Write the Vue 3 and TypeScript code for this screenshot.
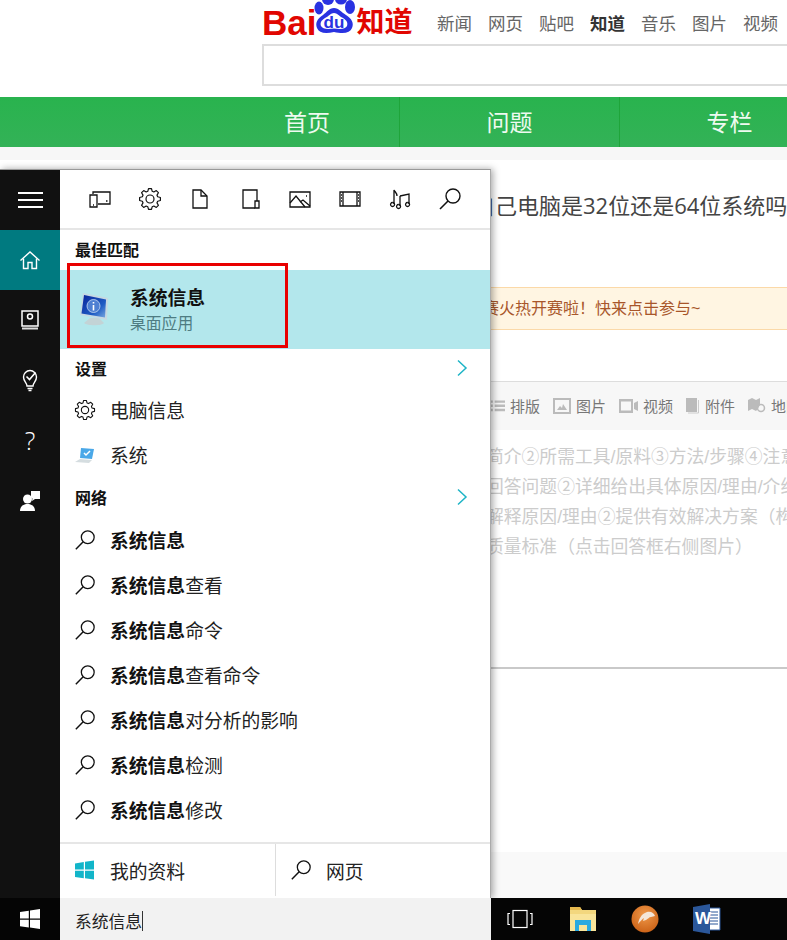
<template>
  <div class="screen">
    <svg class="defs" width="0" height="0" aria-hidden="true">
      <symbol id="magnifier" viewBox="0 0 24 24">
        <circle cx="15" cy="9" r="7" fill="none" stroke="currentColor" stroke-width="1.4" />
        <path d="M10 14 2 22" fill="none" stroke="currentColor" stroke-width="1.6" />
      </symbol>
      <symbol id="gear" viewBox="0 0 24 24">
        <path :d="gearPath" fill="none" stroke="currentColor" stroke-width="1.2" stroke-linejoin="round" />
        <circle cx="12" cy="12" r="4" fill="none" stroke="currentColor" stroke-width="1.2" />
      </symbol>
      <symbol id="chevron" viewBox="0 0 12 18">
        <path d="M2 1.5 10 9l-8 7.5" fill="none" stroke="currentColor" stroke-width="1.5" />
      </symbol>
    </svg>

    <!-- page behind the start menu -->
    <div class="page">
      <header class="top">
        <div class="top-row">
          <div class="logo">
            <span class="logo-bai">Bai</span>
            <svg class="paw" width="42" height="44" viewBox="0 0 42 44">
              <ellipse cx="5" cy="10" rx="4.5" ry="6.5" fill="#2932e1" />
              <ellipse cx="14" cy="1" rx="6" ry="6" fill="#2932e1" />
              <ellipse cx="27" cy="1" rx="6" ry="5.5" fill="#2932e1" />
              <ellipse cx="36" cy="9" rx="5" ry="7" fill="#2932e1" />
              <path d="M20 10c5 0 7 4 12 7 6 4 8 8 6 13-2 5-8 6-18 4-9 2-15 1-17-4-2-5 0-9 6-13 4-3 6-7 11-7z" fill="#2932e1" />
              <path d="M20 15c3 0 5 3 9 5 4 2.500 5 5 4 8-1.500 3-6 3.500-13 2.500-7 1-11.500.5-13-2.500-1-3 0-5.500 4-8 4-2 6-5 9-5z" fill="#fff" />
              <text x="20" y="30" text-anchor="middle" class="paw-text">du</text>
            </svg>
            <span class="logo-zhidao">知道</span>
          </div>
          <nav class="channels">
            <span v-for="c in channels" :key="c" class="channel" :class="{ current: c === '知道' }">{{ c }}</span>
          </nav>
        </div>
        <div class="search-box"></div>
      </header>

      <div class="green-nav">
        <div class="green-cell first">首页</div>
        <div class="green-cell">问题</div>
        <div class="green-cell">专栏</div>
      </div>
      <div class="strip"></div>

      <main class="content">
        <h1 class="title">自己电脑是32位还是64位系统吗</h1>
        <div class="banner">赛火热开赛啦！快来点击参与~</div>
        <div class="toolbar">
          <span class="tool">
            <svg width="15" height="14" viewBox="0 0 16 14"><path d="M0 1h3v2.500H0zM5 1h11v2.500H5zM0 5.500h3V8H0zM5 5.500h11V8H5zM0 10h3v2.500H0zM5 10h11v2.500H5z" fill="#bbb" /></svg>
            排版
          </span>
          <span class="tool">
            <svg width="18" height="16" viewBox="0 0 18 16"><path fill-rule="evenodd" d="M0 0h18v16H0zM2 2v12h14V2z" fill="#bbb" /><path d="M4 12l3-4 2 2 1-4 4 6z" fill="#bbb" /></svg>
            图片
          </span>
          <span class="tool">
            <svg width="19" height="14" viewBox="0 0 19 14"><path fill-rule="evenodd" d="M0 0h14v14H0zM2 2.500v9h10v-9z" fill="#bbb" /><path d="M15 4l4-2v10l-4-2z" fill="#bbb" /></svg>
            视频
          </span>
          <span class="tool">
            <svg width="14" height="16" viewBox="0 0 14 16"><path d="M0 0h11v14H0z" fill="#bbb" /><path d="M12.500 2v13H2" fill="none" stroke="#ccc" /></svg>
            附件
          </span>
          <span class="tool">
            <svg width="18" height="16" viewBox="0 0 18 16"><path d="M0 2l4-2 4 2 4-2v7l-3 5-1 1-4-2-4 2z" fill="#bbb" /><circle cx="13" cy="10" r="3.500" fill="none" stroke="#bbb" stroke-width="1.500" /></svg>
            地图
          </span>
        </div>
        <div class="editor">
          <p v-for="line in hints" :key="line">{{ line }}</p>
        </div>
      </main>
      <div class="page-rest"></div>
    </div>

    <!-- start menu -->
    <aside class="menu">
      <div class="rail">
        <div class="burger"><i></i><i></i><i></i></div>
        <div class="rail-item active">
          <svg width="24" height="24" viewBox="0 0 24 24" fill="none" stroke="#fff" stroke-width="1.400">
            <path d="M2.500 12.500 12 4l9.500 8.500" />
            <path d="M5.500 10.500V20.500h4.500v-6h4v6h4.500V10.500" />
          </svg>
        </div>
        <div class="rail-item">
          <svg width="24" height="24" viewBox="0 0 24 24">
            <path d="M4 3h16v15H4z" fill="none" stroke="#fff" stroke-width="1.500" />
            <circle cx="12" cy="8.500" r="2.500" fill="none" stroke="#fff" stroke-width="1.500" />
            <path d="M4 19.500h16v2H4z" fill="#ddd" />
          </svg>
        </div>
        <div class="rail-item">
          <svg width="24" height="24" viewBox="0 0 24 24" fill="none" stroke="#fff" stroke-width="1.400">
            <path d="M9 18c0-3-3.500-4.500-3.500-9a6.500 6.500 0 0 1 13 0c0 4.500-3.500 6-3.500 9z" />
            <path d="M9.500 20.500h5M10.500 22.500h3" />
            <path d="M8.500 8.500l3 3 6-7" stroke-width="1.600" />
          </svg>
        </div>
        <div class="rail-item question">?</div>
        <div class="rail-item">
          <svg width="24" height="24" viewBox="0 0 24 24" fill="#fff">
            <circle cx="9.500" cy="11" r="4.500" />
            <path d="M2 23c0-4.500 3-7 7.500-7s7.500 2.500 7.500 7z" />
            <path d="M13 3h9v8h-5l-3 2 .5-2.500-1.500-1z" />
          </svg>
        </div>
      </div>

      <div class="panel">
        <div class="filters">
          <span v-for="f in filterIcons" :key="f.name" class="filter">
            <svg width="24" height="24" viewBox="0 0 24 24" fill="none" stroke="currentColor" stroke-width="1.300">
              <path v-for="d in f.paths" :key="d" :d="d" />
            </svg>
          </span>
          <span class="filter">
            <svg width="24" height="24"><use href="#gear" /></svg>
          </span>
          <span class="filter search-filter">
            <svg width="24" height="24"><use href="#magnifier" /></svg>
          </span>
        </div>

        <div class="label first-label">最佳匹配</div>
        <div class="best">
          <svg class="monitor" width="32" height="36" viewBox="0 0 32 36">
            <defs>
              <linearGradient id="screenBlue" x1="0" y1="0" x2="1" y2="1">
                <stop offset="0" stop-color="#08249a" />
                <stop offset="0.65" stop-color="#1f5cc4" />
                <stop offset="1" stop-color="#7aa8e0" />
              </linearGradient>
            </defs>
            <path d="M11 26h9l5 5c-2 3-17 3-20 0z" fill="#c3d3d6" />
            <path d="M4 1l25 5-1 22-27-5z" fill="#c6d8e2" />
            <path d="M5 3l22 4.500-1 18-23.500-4z" fill="url(#screenBlue)" />
            <circle cx="14.500" cy="14" r="6.500" fill="#4f80d2" stroke="#c9dcf2" stroke-width="0.800" />
            <path d="M14.500 10v1.500M14.500 13v5.500" stroke="#fff" stroke-width="1.600" />
          </svg>
          <div class="best-text">
            <div class="best-name">系统信息</div>
            <div class="best-sub">桌面应用</div>
          </div>
        </div>
        <div class="red-box"></div>

        <div class="label with-arrow settings-label">
          设置
          <svg class="chevron" width="12" height="18"><use href="#chevron" /></svg>
        </div>
        <div class="row">
          <svg class="row-icon gear-icon" width="22" height="22"><use href="#gear" /></svg>
          <span>电脑信息</span>
        </div>
        <div class="row">
          <svg class="row-icon" width="22" height="22" viewBox="0 0 22 22">
            <path d="M7 4l13 1-2 10-12-1z" fill="#4aa8e8" />
            <path d="M10 9l2 2 4-4" fill="none" stroke="#fff" stroke-width="1.500" />
            <path d="M6 15l12 1-3 3-14-1z" fill="#d5dde0" />
          </svg>
          <span>系统</span>
        </div>
        <div class="label with-arrow">
          网络
          <svg class="chevron" width="12" height="18"><use href="#chevron" /></svg>
        </div>
        <div v-for="s in suggestions" :key="s" class="row">
          <svg class="row-icon" width="22" height="22"><use href="#magnifier" /></svg>
          <span><b>系统信息</b>{{ s }}</span>
        </div>

        <div class="footer">
          <div class="foot-left">
            <svg class="row-icon" width="20" height="20" viewBox="0 0 20 20">
              <path d="M0 3.500 8.800 2v7.500H0zM10 1.800 19 .5v9h-9zM0 10.800h8.800v7.500L0 17zM10 10.800h9v8.700l-9-1.300z" fill="#12b5c9" />
            </svg>
            <span>我的资料</span>
          </div>
          <div class="foot-right">
            <svg class="row-icon" width="22" height="22"><use href="#magnifier" /></svg>
            <span>网页</span>
          </div>
        </div>
      </div>
    </aside>

    <!-- taskbar -->
    <footer class="taskbar">
      <div class="start">
        <svg width="20" height="20" viewBox="0 0 20 20">
          <path d="M0 3 8.800 1.800v7.700H0zM10 1.600 20 0v9.500H10zM0 10.700h8.800v7.700L0 17.200zM10 10.700h10V20l-10-1.500z" fill="#fff" />
        </svg>
      </div>
      <div class="search-input">系统信息<i class="caret"></i></div>
      <div class="tray">
        <svg class="task-view" width="26" height="20" viewBox="0 0 26 20" fill="none" stroke="#fff" stroke-width="1.200">
          <rect x="6" y="1.500" width="14" height="17" />
          <path d="M3 4.500H1v11h2M23 4.500h2v11h-2" />
        </svg>
        <svg class="explorer" width="28" height="28" viewBox="0 0 28 28">
          <path d="M1 2h10l2 3h14v21H1z" fill="#f3d77e" />
          <path d="M1 2h10l2 3H1z" fill="#e6b94f" />
          <path d="M1 9h26v17H1z" fill="#f9e49a" />
          <path d="M6 15h16v11h-4v-6h-8v6H6z" fill="#2aa9e0" />
        </svg>
        <svg class="browser" width="28" height="28" viewBox="0 0 28 28">
          <defs>
            <radialGradient id="foxOrange" cx="0.5" cy="0.35" r="0.7">
              <stop offset="0" stop-color="#f0994a" />
              <stop offset="1" stop-color="#c95f14" />
            </radialGradient>
          </defs>
          <circle cx="14" cy="14" r="13.500" fill="url(#foxOrange)" />
          <path d="M7 19c1-5 3-10 9-12 4-1 7 1 8 4l-4 1c-2 0-3 2-5 3l-3 1 1-3c-2 1-4 4-6 6z" fill="#f4e6d8" />
        </svg>
        <div class="word">
          <svg width="28" height="30" viewBox="0 0 28 30">
            <path d="M15 4h12v22H15z" fill="#fff" stroke="#2b579a" />
            <path d="M17 8h8M17 11h8M17 14h8M17 17h8M17 20h8" stroke="#2b579a" stroke-width="1.200" />
            <path d="M0 3l17-3v30L0 27z" fill="#2b579a" />
          </svg>
          <span class="word-w">W</span>
        </div>
      </div>
    </footer>
  </div>
</template>

<script setup lang="ts">
const channels: string[] = ['新闻', '网页', '贴吧', '知道', '音乐', '图片', '视频']

const hints: string[] = [
  '简介②所需工具/原料③方法/步骤④注意',
  '回答问题②详细给出具体原因/理由/介绍',
  '解释原因/理由②提供有效解决方案（构',
  '质量标准（点击回答框右侧图片）'
]

const suggestions: string[] = ['', '查看', '命令', '查看命令', '对分析的影响', '检测', '修改']

const filterIcons = [
  { name: 'device', paths: ['M5 7V5h17v12H10', 'M2 8h7v12H2z', 'M18 14h1.500', 'M5 18h1'] },
  { name: 'doc', paths: ['M5 3h8l6 6v12H5z', 'M13 3v6h6'] },
  { name: 'tablet', paths: ['M19 14V3H5v18h12', 'M17 14h4v7h-4z'] },
  { name: 'image', paths: ['M2 5h20v15H2z', 'M2 16l6-7 9 11', 'M12 15l3-2 7 6', 'M18 9h1'] },
  { name: 'film', paths: ['M2 5h20v14H2z', 'M5 5v14M19 5v14', 'M3 8h1M3 11h1M3 14h1M20 8h1M20 11h1M20 14h1'] },
  { name: 'music', paths: ['M6 17V3c1 2 3 3 3 6', 'M12 9l9-2v10', 'M12 9v10', 'M4.500 15.500a2 2 0 1 0 .1 0', 'M10.500 17.500a2 2 0 1 0 .1 0', 'M19.500 15.500a2 2 0 1 0 .1 0'] }
]

// eight-tooth cog outline
const buildGear = (teeth: number, outer: number, inner: number): string => {
  const pts: string[] = []
  const step = (Math.PI * 2) / teeth
  for (let i = 0; i < teeth; i++) {
    const a = i * step
    const spots: [number, number][] = [
      [a - step * 0.36, inner],
      [a - step * 0.18, outer],
      [a + step * 0.18, outer],
      [a + step * 0.36, inner]
    ]
    for (const [ang, r] of spots) {
      pts.push(`${(12 + r * Math.cos(ang)).toFixed(2)} ${(12 + r * Math.sin(ang)).toFixed(2)}`)
    }
  }
  return 'M' + pts.join('L') + 'Z'
}

const gearPath = buildGear(8, 10.5, 8)
</script>

<style scoped>
.screen {
  position: relative;
  width: 787px;
  height: 940px;
  overflow: hidden;
  background: #fff;
  font-family: "Liberation Sans", "Noto Sans CJK SC", sans-serif;
  color: #222;
}

.defs {
  position: absolute;
}

.page {
  display: flex;
  flex-direction: column;
  height: 940px;
}

.top {
  height: 97px;
  flex: none;
  padding-left: 262px;
  box-sizing: border-box;
}

.top-row {
  height: 44px;
  display: flex;
  align-items: flex-start;
}

.logo {
  display: flex;
  width: 175px;
  height: 44px;
  flex: none;
}

.logo-bai {
  font-size: 35px;
  font-weight: 700;
  color: #e10601;
  line-height: 34px;
  margin-top: 6px;
}

.paw {
  margin: -2px 0 0 -2px;
  flex: none;
}

.paw-text {
  font-family: "Liberation Sans", sans-serif;
  font-size: 17px;
  font-weight: 700;
  fill: #2932e1;
}

.logo-zhidao {
  font-size: 28px;
  font-weight: 700;
  color: #e10601;
  line-height: 36px;
  margin-top: 5px;
  white-space: nowrap;
}

.channels {
  display: flex;
  gap: 16px;
  white-space: nowrap;
  font-size: 17.500px;
  line-height: 48px;
  color: #666;
}

.channel.current {
  color: #333;
  font-weight: 700;
}

.search-box {
  height: 42px;
  width: 600px;
  border: 2px solid #ddd;
  box-sizing: border-box;
}

.green-nav {
  height: 50px;
  flex: none;
  display: flex;
  background: linear-gradient(#29b34e, #33b257);
}

.green-cell {
  width: 220px;
  flex: none;
  text-align: center;
  color: #eefaf0;
  font-size: 23px;
  line-height: 52px;
  border-right: 1px solid #1fa53a;
  box-sizing: border-box;
}

.green-cell.first {
  width: 400px;
  padding-left: 215px;
}

.strip {
  height: 13px;
  flex: none;
  background: #f7f7f7;
}

.content {
  height: 692px;
  flex: none;
  background: #fff;
}

.title {
  margin: 0;
  height: 127px;
  box-sizing: border-box;
  padding: 30px 0 0 473px;
  font-family: "Open Sans", "Noto Sans CJK SC", sans-serif;
  font-size: 22px;
  font-weight: 400;
  line-height: 30px;
  color: #444;
  white-space: nowrap;
}

.banner {
  height: 43px;
  box-sizing: border-box;
  padding-left: 483px;
  background: #fff5e2;
  border-top: 1px solid #fbd9a8;
  border-bottom: 1px solid #fbd9a8;
  font-size: 16px;
  line-height: 41px;
  color: #a8562a;
  white-space: nowrap;
}

.toolbar {
  margin-top: 51px;
  height: 49px;
  box-sizing: border-box;
  padding: 0 0 1px 490px;
  background: #f7f7f7;
  border-top: 1px solid #ddd;
  display: flex;
  align-items: center;
  gap: 13px;
  white-space: nowrap;
  font-size: 15px;
  color: #777;
}

.tool {
  display: flex;
  align-items: center;
  gap: 5px;
}

.editor {
  height: 239px;
  box-sizing: border-box;
  padding: 12px 0 0 486px;
  border-bottom: 2px solid #c9c9c9;
}

.editor p {
  margin: 0;
  font-size: 17.800px;
  line-height: 30px;
  color: #ccc;
  white-space: nowrap;
}

.page-rest {
  flex: 1;
  background: #f9f9f9;
}

.menu {
  position: absolute;
  top: 169px;
  left: 0;
  width: 491px;
  height: 729px;
  display: flex;
  background: #fff;
  border-top: 1px solid #999;
  border-right: 1px solid #aaa;
  box-sizing: border-box;
  box-shadow: 2px 0 7px rgba(0, 0, 0, 0.35);
}

.rail {
  width: 60px;
  flex: none;
  background: #111;
  display: flex;
  flex-direction: column;
}

.burger {
  height: 60px;
  display: flex;
  flex-direction: column;
  align-items: center;
  justify-content: center;
  gap: 5px;
}

.burger i {
  display: block;
  width: 25px;
  height: 2px;
  background: #fff;
}

.rail-item {
  height: 60px;
  display: flex;
  align-items: center;
  justify-content: center;
}

.rail-item.active {
  background: #007a80;
}

.question {
  color: #fff;
  font-family: "Open Sans", sans-serif;
  font-weight: 300;
  font-size: 25px;
}

.panel {
  position: relative;
  flex: 1;
  display: flex;
  flex-direction: column;
  min-width: 0;
}

.filters {
  height: 60px;
  flex: none;
  box-sizing: border-box;
  padding-left: 28px;
  display: flex;
  align-items: center;
  gap: 26px;
  border-bottom: 2px solid #e6e6e6;
  color: #111;
}

.filter {
  width: 24px;
  height: 24px;
  display: block;
  color: #111;
}

.filter:nth-child(1) { order: 1; }
.filter:nth-child(7) { order: 2; }
.filter:nth-child(2) { order: 3; }
.filter:nth-child(3) { order: 4; }
.filter:nth-child(4) { order: 5; }
.filter:nth-child(5) { order: 6; }
.filter:nth-child(6) { order: 7; }
.search-filter { order: 8; }

.label {
  height: 40px;
  flex: none;
  box-sizing: border-box;
  padding: 0 22px 0 15px;
  display: flex;
  align-items: center;
  justify-content: space-between;
  font-size: 16px;
  font-weight: 700;
  color: #111;
}

.first-label {
  padding-bottom: 2px;
}

.settings-label {
  height: 38px;
}

.best {
  height: 79px;
  flex: none;
  background: #b3e7ec;
  display: flex;
  align-items: center;
  padding-left: 19px;
}

.monitor {
  flex: none;
}

.best-text {
  margin-left: 19px;
  padding-top: 3px;
}

.best-name {
  font-size: 18.800px;
  font-weight: 700;
  line-height: 26px;
  color: #111;
}

.best-sub {
  font-size: 15.800px;
  line-height: 24px;
  color: #4e7c82;
}

.red-box {
  position: absolute;
  left: 7px;
  top: 93px;
  width: 221px;
  height: 85px;
  box-sizing: border-box;
  border: 3px solid #e90000;
}

.chevron {
  color: #1db4c6;
  flex: none;
}

.row {
  height: 45px;
  flex: none;
  display: flex;
  align-items: center;
  padding-left: 14px;
  font-size: 18.800px;
  color: #222;
}

.row b {
  color: #111;
}

.row-icon {
  flex: none;
  color: #111;
  margin-right: 14px;
}

.footer {
  margin-top: auto;
  height: 56px;
  flex: none;
  display: flex;
  border-top: 2px solid #e6e6e6;
  box-sizing: border-box;
  font-size: 18.800px;
  padding-bottom: 2px;
}

.foot-left {
  width: 216px;
  flex: none;
  display: flex;
  align-items: center;
  padding-left: 15px;
  box-sizing: border-box;
  border-right: 1px solid #ddd;
}

.foot-left .row-icon {
  margin-right: 15px;
}

.foot-right {
  display: flex;
  align-items: center;
  padding-left: 14px;
}

.taskbar {
  position: absolute;
  left: 0;
  bottom: 0;
  width: 787px;
  height: 42px;
  display: flex;
  background: #050505;
}

.start {
  width: 60px;
  flex: none;
  display: flex;
  align-items: center;
  justify-content: center;
}

.search-input {
  width: 431px;
  flex: none;
  box-sizing: border-box;
  padding: 4px 0 0 15px;
  background: #f2f2f2;
  display: flex;
  align-items: center;
  font-size: 16.800px;
  color: #222;
}

.caret {
  display: block;
  width: 1px;
  height: 20px;
  background: #333;
}

.tray {
  display: flex;
  align-items: center;
  padding-left: 16px;
}

.explorer {
  margin-left: 36px;
}

.browser {
  margin-left: 34px;
}

.word {
  position: relative;
  margin-left: 34px;
  width: 28px;
  height: 30px;
}

.word-w {
  position: absolute;
  left: 2px;
  top: 5px;
  font-size: 17px;
  font-weight: 700;
  line-height: 20px;
  color: #fff;
}
</style>
